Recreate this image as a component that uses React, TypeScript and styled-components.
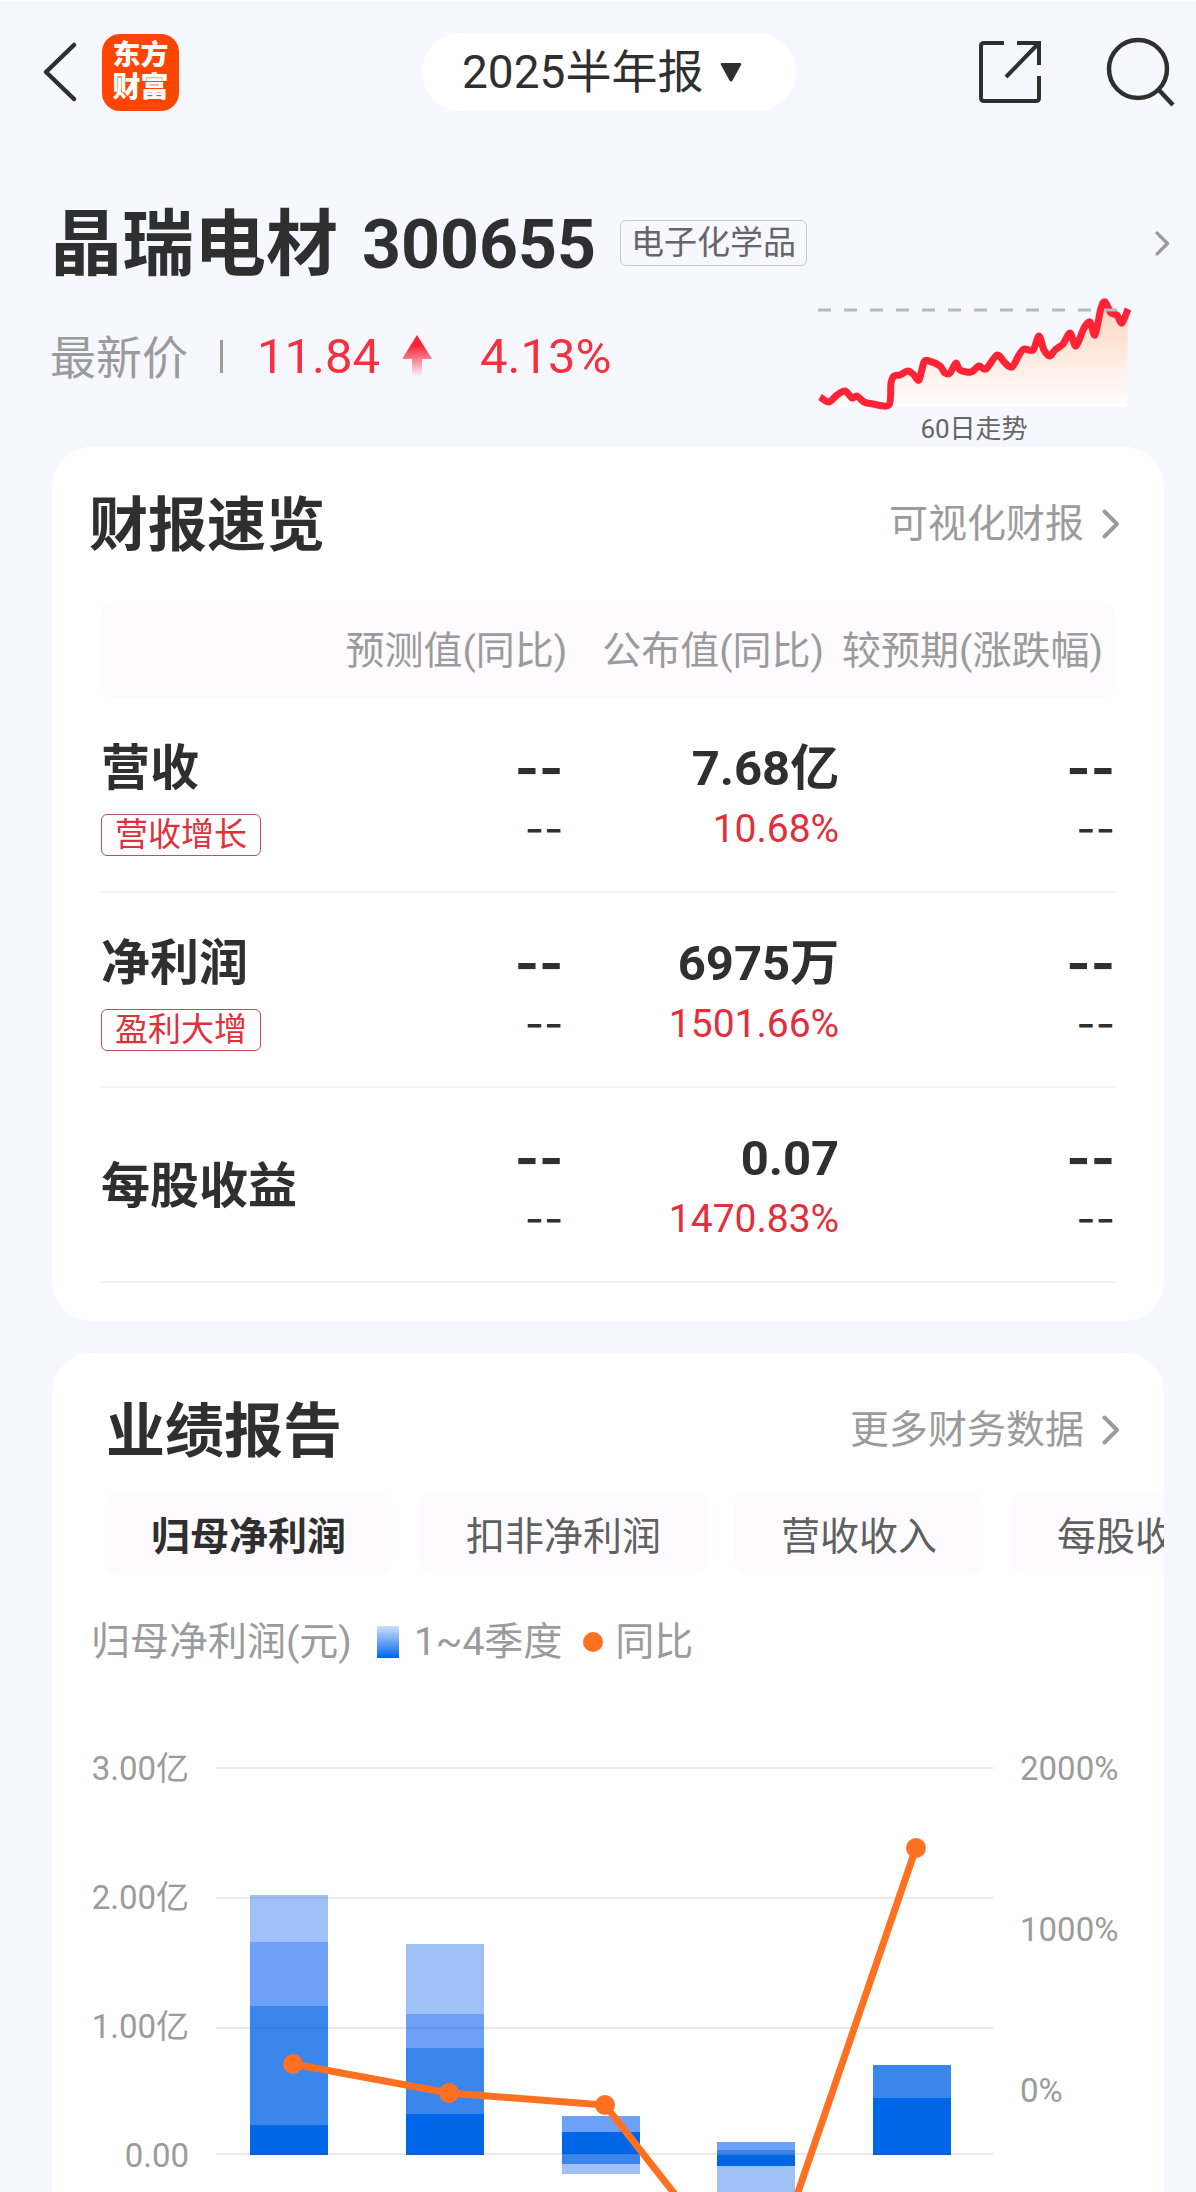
import React, { useState } from "react";
import styled, { createGlobalStyle } from "styled-components";

const color = {
  page: "#f7f8ff",
  card: "#ffffff",
  tint: "#fefbff",
  ink: "#2f2f2f",
  body: "#5f6060",
  muted: "#9b9b9b",
  rule: "#f3f3f4",
  red: "#e0303c",
  trend: "#ff2335",
  orange: "#ff7020",
};

const GlobalStyle = createGlobalStyle`
  *, *::before, *::after { box-sizing: border-box; }
  body {
    margin: 0;
    background: ${color.page};
    color: ${color.ink};
    font-family: Roboto, "Noto Sans CJK SC", sans-serif;
  }
  h1, h2, p, figure { margin: 0; }
  svg { display: block; }
`;

const Screen = styled.div`
  height: 100vh;
  overflow: hidden;
  display: flex;
  flex-direction: column;
  border-top: 1px solid #ffffff;
`;

/* ---------- top bar ---------- */

const TopBar = styled.header`
  flex: none;
  display: grid;
  grid-template-columns: 1fr auto 1fr;
  align-items: center;
  height: 142px;
  padding: 0 20px 0 42px;
`;

const BarGroup = styled.div<{ $end?: boolean; $gap: number }>`
  display: flex;
  align-items: center;
  justify-content: ${(p) => (p.$end ? "flex-end" : "flex-start")};
  gap: ${(p) => p.$gap}px;
`;

const IconButton = styled.button`
  padding: 0;
  border: 0;
  background: none;
  cursor: pointer;
`;

const Logo = styled.a`
  display: grid;
  place-content: center;
  width: 77px;
  height: 77px;
  border-radius: 18px;
  background: #ff4500;
  color: #ffffff;
  font-size: 28px;
  font-weight: 900;
  line-height: 32px;
  text-decoration: none;
`;

const PeriodPicker = styled.label`
  position: relative;
  display: block;
`;

const PeriodSelect = styled.select`
  appearance: none;
  height: 78px;
  padding: 0 92px 0 40px;
  border: 0;
  border-radius: 39px;
  background: ${color.card};
  color: ${color.ink};
  font-family: inherit;
  font-size: 46px;
`;

const PeriodArrow = styled.svg`
  position: absolute;
  right: 54px;
  top: 30px;
  pointer-events: none;
`;

/* ---------- stock summary ---------- */

const Summary = styled.section`
  flex: none;
  padding: 60px 26px 0 50px;
`;

const NameRow = styled.div`
  display: flex;
  align-items: center;
  height: 80px;
`;

const StockName = styled.h1`
  display: flex;
  align-items: center;
  gap: 24px;
  padding-top: 4px;
  font-size: 72px;
  font-weight: 700;
  line-height: 80px;
`;

const StockCode = styled.span`
  font-size: 68px;
`;

const Industry = styled.a`
  margin-left: 24px;
  padding: 0 10px;
  border: 1px solid #c6c6cc;
  border-radius: 6px;
  color: #666666;
  font-size: 33px;
  line-height: 44px;
  text-decoration: none;
`;

const DetailLink = styled.a`
  margin-left: auto;
`;

const QuoteRow = styled.div`
  display: flex;
  justify-content: space-between;
  padding: 13px 38px 0 0;
`;

const Quote = styled.div`
  display: flex;
  align-items: center;
  height: 120px;
  color: #f5303f;
  font-size: 49px;
`;

const QuoteLabel = styled.span`
  padding: 0 32px 4px 0;
  color: ${color.muted};
  font-size: 46px;
`;

const QuoteDivider = styled.span`
  width: 3px;
  height: 33px;
  margin-right: 34px;
  background: ${color.muted};
`;

const QuoteArrow = styled.svg`
  margin: 0 48px 0 22px;
`;

const Trend = styled.figure`
  text-align: center;
`;

const TrendCaption = styled.figcaption`
  color: #666666;
  font-size: 26px;
  line-height: 35px;
`;

/* ---------- cards ---------- */

const Card = styled.section<{ $open?: boolean }>`
  flex: none;
  margin: 0 32px ${(p) => (p.$open ? 0 : 32)}px 52px;
  padding-top: 40px;
  padding-bottom: ${(p) => (p.$open ? 0 : 38)}px;
  border-radius: ${(p) => (p.$open ? "40px 40px 0 0" : "40px")};
  background: ${color.card};
  overflow: hidden;
`;

const CardHead = styled.div<{ $inset: number }>`
  display: flex;
  align-items: center;
  justify-content: space-between;
  height: 72px;
  padding: 0 44px 0 ${(p) => p.$inset}px;
`;

const CardTitle = styled.h2`
  padding-top: 5px;
  font-size: 59px;
  font-weight: 700;
  line-height: 72px;
`;

const MoreLink = styled.a`
  display: flex;
  align-items: center;
  gap: 18px;
  padding-top: 1px;
  color: ${color.muted};
  font-size: 39px;
  line-height: 56px;
  text-decoration: none;
`;

/* ---------- report table ---------- */

const TableWrap = styled.div`
  padding: 42px 49px 0;
`;

const Table = styled.table`
  width: 100%;
  table-layout: fixed;
  border-collapse: separate;
  border-spacing: 0;
`;

const HeadCell = styled.th<{ $pad?: number }>`
  height: 97px;
  padding: 0 ${(p) => p.$pad ?? 0}px 5px 0;
  background: ${color.tint};
  color: ${color.muted};
  font-size: 39px;
  font-weight: 400;
  text-align: right;
  white-space: nowrap;
  &:first-child { border-radius: 14px 0 0 14px; }
  &:last-child { border-radius: 0 14px 14px 0; }
`;

const RowHead = styled.th`
  height: 195px;
  padding: 5px 0 0;
  border-bottom: 2px solid ${color.rule};
  font-size: 49px;
  font-weight: 700;
  line-height: 60px;
  text-align: left;
  white-space: nowrap;
`;

const Badge = styled.span`
  display: block;
  width: max-content;
  margin-top: 15px;
  padding: 0 13px;
  border: 1px solid #b8505e;
  border-radius: 6px;
  color: ${color.red};
  font-size: 33px;
  font-weight: 400;
  line-height: 40px;
`;

const ValueCell = styled.td<{ $pad?: number }>`
  height: 195px;
  padding: 8px ${(p) => p.$pad ?? 0}px 0 0;
  border-bottom: 2px solid ${color.rule};
  text-align: right;
`;

const Value = styled.div<{ $empty: boolean }>`
  font-family: ${(p) => (p.$empty ? "Inter, sans-serif" : "inherit")};
  font-size: ${(p) => (p.$empty ? 52 : 49)}px;
  font-weight: 700;
  line-height: 60px;
`;

const Change = styled.div<{ $empty: boolean }>`
  color: ${(p) => (p.$empty ? color.ink : color.red)};
  font-family: ${(p) => (p.$empty ? "Inter, sans-serif" : "inherit")};
  font-size: ${(p) => (p.$empty ? 42 : 39)}px;
  line-height: 60px;
`;

/* ---------- performance card ---------- */

const Tabs = styled.div`
  display: flex;
  gap: 26px;
  padding: 26px 0 0 52px;
  overflow: hidden;
`;

const Tab = styled.button<{ $active: boolean }>`
  flex: none;
  height: 84px;
  padding: 0 47px;
  border: 0;
  border-radius: 16px;
  background: ${color.tint};
  color: ${(p) => (p.$active ? color.ink : color.body)};
  font-family: inherit;
  font-size: 39px;
  font-weight: ${(p) => (p.$active ? 700 : 400)};
  white-space: nowrap;
  cursor: pointer;
`;

const Legend = styled.div`
  display: flex;
  align-items: center;
  height: 56px;
  margin: 39px 0 30px 39px;
  color: ${color.muted};
  font-size: 39px;
  line-height: 56px;
`;

const BarSwatch = styled.span`
  width: 22px;
  height: 32px;
  margin: 0 15px 0 25px;
  background: linear-gradient(#cfe0fc, #0066ea);
`;

const DotSwatch = styled.span`
  width: 20px;
  height: 20px;
  margin: 0 12px 0 21px;
  border-radius: 50%;
  background: ${color.orange};
`;

const ChartSvg = styled.svg`
  width: 100%;
  height: auto;
  font-size: 33px;
`;

/* ---------- icons ---------- */

const Chevron = ({ size = 30 }: { size?: number }) => (
  <svg width={(size * 18) / 30} height={size} viewBox="0 0 18 30" fill="none" aria-hidden="true">
    <path d="M2.5 2.5 15 15 2.5 27.5" stroke={color.muted} strokeWidth="4" strokeLinecap="round" strokeLinejoin="round" />
  </svg>
);

const BackIcon = () => (
  <svg width="36" height="60" viewBox="0 0 36 60" fill="none">
    <path d="M32 3 4 30 32 57" stroke={color.ink} strokeWidth="4.5" strokeLinecap="round" strokeLinejoin="round" />
  </svg>
);

const ShareIcon = () => (
  <svg width="62" height="62" viewBox="0 0 62 62" fill="none" stroke={color.ink} strokeWidth="4">
    <path d="M25 2H5Q2 2 2 5V57Q2 60 5 60H57Q60 60 60 57V35" />
    <path d="M38 2H60V24" />
    <path d="M59 3 27 36" />
  </svg>
);

const SearchIcon = () => (
  <svg width="70" height="70" viewBox="0 0 70 70" fill="none" stroke={color.ink} strokeWidth="4.5">
    <circle cx="32" cy="32" r="29" />
    <path d="M52 52 67 68" />
  </svg>
);

/* ---------- data ---------- */

const EMPTY = "--";

const rows = [
  { name: "营收", badge: "营收增长", forecast: [EMPTY, EMPTY], actual: ["7.68亿", "10.68%"], versus: [EMPTY, EMPTY] },
  { name: "净利润", badge: "盈利大增", forecast: [EMPTY, EMPTY], actual: ["6975万", "1501.66%"], versus: [EMPTY, EMPTY] },
  { name: "每股收益", badge: "", forecast: [EMPTY, EMPTY], actual: ["0.07", "1470.83%"], versus: [EMPTY, EMPTY] },
];

const tabs = ["归母净利润", "扣非净利润", "营收收入", "每股收益"];

const Q = ["#0066e8", "#3a86ec", "#6ca1f7", "#9fc1f7"];

/* Each segment: [quarter index, top, bottom]. */
const bars: { x: number; parts: [number, number, number][] }[] = [
  { x: 198, parts: [[3, 195, 242], [2, 242, 306], [1, 306, 425], [0, 425, 455]] },
  { x: 354, parts: [[3, 244, 314], [2, 314, 348], [1, 348, 414], [0, 414, 455]] },
  { x: 510, parts: [[2, 416, 432], [0, 432, 454], [1, 454, 464], [3, 464, 474]] },
  { x: 665, parts: [[2, 442, 450], [1, 450, 455], [0, 455, 466], [3, 466, 600]] },
  { x: 821, parts: [[1, 365, 398], [0, 398, 455]] },
];

const growth: [number, number][] = [[241, 364], [397, 393], [553, 405], [708, 603], [864, 148]];
const gridLines = [68, 198, 328, 454];
const leftAxis: [string, number][] = [["3.00亿", 68], ["2.00亿", 197], ["1.00亿", 326], ["0.00", 455]];
const rightAxis: [string, number][] = [["2000%", 68], ["1000%", 229], ["0%", 390]];

const trend: [number, number][] = [
  [4, 101], [13, 106], [21, 99], [29, 95], [36, 102], [41, 100], [48, 106], [57, 108], [73, 109], [75, 87],
  [78, 80], [84, 79], [92, 75], [98, 79], [103, 84], [108, 66], [113, 65], [124, 70], [129, 77], [134, 77],
  [140, 67], [144, 74], [155, 76], [163, 70], [170, 73], [181, 59], [189, 67], [196, 71], [203, 59], [208, 53],
  [217, 54], [223, 40], [228, 54], [234, 60], [239, 54], [247, 48], [254, 37], [260, 50], [268, 32], [274, 26],
  [279, 39], [285, 12], [289, 6], [295, 17], [301, 19], [306, 27], [312, 13],
];

/* Joins the points with a smooth curve whose tangents follow the neighbouring points. */
const smoothPath = (points: [number, number][]) =>
  points.slice(1).reduce((path, [x, y], i) => {
    const [px, py] = points[i];
    const [bx, by] = points[Math.max(i - 1, 0)];
    const [nx, ny] = points[Math.min(i + 2, points.length - 1)];
    return `${path}C${px + (x - bx) / 7} ${py + (y - by) / 7} ${x - (nx - px) / 7} ${y - (ny - py) / 7} ${x} ${y}`;
  }, `M${points[0].join(" ")}`);

const trendPath = smoothPath(trend);

/* ---------- sections ---------- */

const Figures = ({ pair, pad }: { pair: string[]; pad?: number }) => (
  <ValueCell $pad={pad}>
    <Value $empty={pair[0] === EMPTY}>{pair[0]}</Value>
    <Change $empty={pair[1] === EMPTY}>{pair[1]}</Change>
  </ValueCell>
);

const TrendChart = () => (
  <svg width="316" height="116" viewBox="0 0 316 116" fill="none" role="img" aria-label="60日走势">
    <defs>
      <linearGradient id="trendFill" x1="0" y1="0" x2="0" y2="1">
        <stop offset="0" stopColor="#ffd2bd" />
        <stop offset="1" stopColor="#ffffff" />
      </linearGradient>
    </defs>
    <path d={`${trendPath}L311 111L4 111Z`} fill="url(#trendFill)" />
    <path d={trendPath} stroke={color.trend} strokeWidth="7" strokeLinejoin="round" />
    <path d="M2 14H306" stroke="#b9b9bb" strokeWidth="3" strokeDasharray="13 13" />
  </svg>
);

const ProfitChart = () => (
  <ChartSvg viewBox="0 0 1112 640" role="img" aria-label="归母净利润">
    {bars.map((bar) =>
      bar.parts.map(([q, top, bottom]) => (
        <rect key={`${bar.x}-${top}`} x={bar.x} y={top} width="78" height={bottom - top} fill={Q[q]} />
      )),
    )}
    {gridLines.map((y) => (
      <path key={y} d={`M164 ${y}H941`} stroke="rgba(60, 40, 50, 0.1)" strokeWidth="2" />
    ))}
    <polyline points={growth.map((p) => p.join(",")).join(" ")} fill="none" stroke={color.orange} strokeWidth="7" />
    {growth.map(([x, y]) => (
      <circle key={x} cx={x} cy={y} r="10" fill={color.orange} />
    ))}
    {leftAxis.map(([text, y]) => (
      <text key={text} x="137" y={y + 12} textAnchor="end" fill={color.muted}>{text}</text>
    ))}
    {rightAxis.map(([text, y]) => (
      <text key={text} x="968" y={y + 12} fill={color.muted}>{text}</text>
    ))}
  </ChartSvg>
);

export default function App() {
  const [active, setActive] = useState(0);

  return (
    <Screen>
      <GlobalStyle />
      <TopBar>
        <BarGroup $gap={24}>
          <IconButton aria-label="返回"><BackIcon /></IconButton>
          <Logo href="#home"><span>东方</span><span>财富</span></Logo>
        </BarGroup>
        <PeriodPicker>
          <PeriodSelect aria-label="报告期">
            <option>2025半年报</option>
          </PeriodSelect>
          <PeriodArrow width="22" height="19" viewBox="0 0 22 19" aria-hidden="true">
            <path d="M2 0H20Q22 0 21 2L12.500 17.500Q11 19.500 9.500 17.500L1 2Q0 0 2 0Z" fill={color.ink} />
          </PeriodArrow>
        </PeriodPicker>
        <BarGroup $end $gap={65}>
          <IconButton aria-label="分享"><ShareIcon /></IconButton>
          <IconButton aria-label="搜索"><SearchIcon /></IconButton>
        </BarGroup>
      </TopBar>

      <Summary>
        <NameRow>
          <StockName>晶瑞电材<StockCode>300655</StockCode></StockName>
          <Industry href="#industry">电子化学品</Industry>
          <DetailLink href="#detail" aria-label="详情"><Chevron size={25} /></DetailLink>
        </NameRow>
        <QuoteRow>
          <Quote>
            <QuoteLabel>最新价</QuoteLabel>
            <QuoteDivider />
            <span>11.84</span>
            <QuoteArrow width="30" height="42" viewBox="0 0 30 42" aria-hidden="true">
              <defs>
                <linearGradient id="rise" x1="0" y1="0" x2="0" y2="1">
                  <stop offset="0.25" stopColor="#ff2335" />
                  <stop offset="1" stopColor="#ff2335" stopOpacity="0" />
                </linearGradient>
              </defs>
              <path d="M15 0 30 24H20V42H10V24H0Z" fill="url(#rise)" />
            </QuoteArrow>
            <span>4.13%</span>
          </Quote>
          <Trend>
            <TrendChart />
            <TrendCaption>60日走势</TrendCaption>
          </Trend>
        </QuoteRow>
      </Summary>

      <Card>
        <CardHead $inset={37}>
          <CardTitle>财报速览</CardTitle>
          <MoreLink href="#visual">可视化财报<Chevron /></MoreLink>
        </CardHead>
        <TableWrap>
          <Table>
            <colgroup>
              <col style={{ width: "20%" }} />
              <col style={{ width: "26%" }} />
              <col style={{ width: "27%" }} />
              <col style={{ width: "27%" }} />
            </colgroup>
            <thead>
              <tr>
                <HeadCell aria-label="指标" />
                <HeadCell scope="col">预测值(同比)</HeadCell>
                <HeadCell scope="col" $pad={17}>公布值(同比)</HeadCell>
                <HeadCell scope="col" $pad={12}>较预期(涨跌幅)</HeadCell>
              </tr>
            </thead>
            <tbody>
              {rows.map((row) => (
                <tr key={row.name}>
                  <RowHead scope="row">
                    {row.name}
                    {row.badge && <Badge>{row.badge}</Badge>}
                  </RowHead>
                  <Figures pair={row.forecast} pad={4} />
                  <Figures pair={row.actual} pad={2} />
                  <Figures pair={row.versus} />
                </tr>
              ))}
            </tbody>
          </Table>
        </TableWrap>
      </Card>

      <Card $open>
        <CardHead $inset={54}>
          <CardTitle>业绩报告</CardTitle>
          <MoreLink href="#finance">更多财务数据<Chevron /></MoreLink>
        </CardHead>
        <Tabs role="tablist">
          {tabs.map((name, i) => (
            <Tab key={name} role="tab" aria-selected={i === active} $active={i === active} onClick={() => setActive(i)}>
              {name}
            </Tab>
          ))}
        </Tabs>
        <Legend>
          归母净利润(元)
          <BarSwatch />
          1~4季度
          <DotSwatch />
          同比
        </Legend>
        <ProfitChart />
      </Card>
    </Screen>
  );
}
